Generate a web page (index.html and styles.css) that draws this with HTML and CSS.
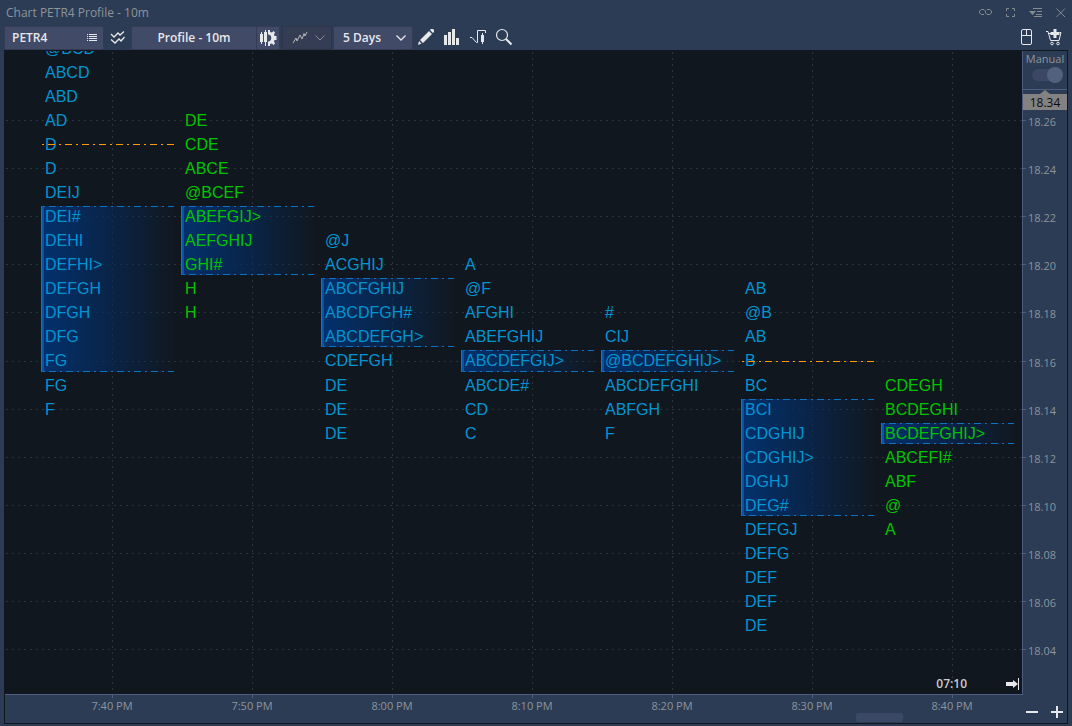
FILE: index.html
```html
<!DOCTYPE html>
<html lang="en">
<head>
<meta charset="utf-8">
<title>Chart PETR4 Profile - 10m</title>
<link rel="stylesheet" href="styles.css">
</head>
<body>
<div class="window">
  <header class="titlebar">
    <h1 class="title">Chart PETR4 Profile - 10m</h1>
    <div class="window-actions">
      <button class="icon-btn" aria-label="Link"><svg width="14" height="12" viewBox="0 0 14 12" fill="none" stroke="currentColor"><path d="M5 7.500H2.500L.5 6V4L2.500 2.500H5L6.500 4V5.500M6.500 4.500V6L8 7.500H10.500L12.500 6V4L10.500 2.500H8"/></svg></button>
      <button class="icon-btn" aria-label="Maximize"><svg width="12" height="12" viewBox="0 0 12 12" fill="none" stroke="currentColor"><path d="M1.500 4V1.500H4M7 1.500H9.500V4M9.500 7V9.500H7M4 9.500H1.500V7"/></svg></button>
      <button class="icon-btn" aria-label="Menu"><svg width="14" height="12" viewBox="0 0 14 12" fill="none" stroke="currentColor"><path d="M0 4H7L3.500 8Z" fill="currentColor" stroke="none"/><path d="M4 1.500H13M8 4.500H13M7 7.500H13M5 9.500H13"/></svg></button>
      <button class="icon-btn" aria-label="Close"><svg width="12" height="12" viewBox="0 0 12 12" fill="none" stroke="currentColor"><path d="M1.500 1.500L10 10M10 1.500L1.500 10"/></svg></button>
    </div>
  </header>

  <div class="toolbar">
    <div class="field symbol">
      <input class="symbol-input" type="text" value="PETR4" aria-label="Symbol">
      <button class="icon-btn" aria-label="Symbol list"><svg width="12" height="10" viewBox="0 0 12 10" fill="none" stroke="currentColor"><path d="M0 1.500H1M2 1.500H10M0 3.500H1M2 3.500H10M0 5.500H1M2 5.500H10M0 7.500H1M2 7.500H10"/></svg></button>
    </div>
    <button class="icon-btn compare" aria-label="Compare"><svg width="16" height="16" viewBox="0 0 16 16" fill="none" stroke="currentColor" stroke-width="1.300"><path d="M1 4L4 7L8 3L10 5L14 1.500M1 9.500L5 13L9 9L11 11L14.500 7"/></svg></button>
    <button class="field profile">Profile - 10m</button>
    <button class="field settings" aria-label="Chart settings"><svg width="20" height="18" viewBox="0 0 20 18"><path d="M2 5h3v8h-3zM3 3h1v12h-1zM6 3h3v10h-3zM7 1h1v16h-1z" fill="currentColor"/><path d="M10 1h2v2l2 .5 1.500-1.500 1.500 1.500-1 2 .5 1.500H18.500v4H16.500l-.5 1.500 1 2-1.500 1.500-1.500-1.500-2 .5v2h-2v-4.500c4.500 0 4.500-7 0-7z" fill="currentColor"/></svg></button>
    <button class="field line-tool" aria-label="Line style" disabled>
      <svg width="16" height="14" viewBox="0 0 16 14" fill="none" stroke="currentColor"><path d="M1 12L4 7L5 10L8 4L10 8L12 2.500L13 5L15 1"/></svg>
      <svg width="10" height="8" viewBox="0 0 10 8" fill="none" stroke="currentColor"><path d="M.5 1.500L5 6L9.500 1.500"/></svg>
    </button>
    <div class="field days">
      <select class="days-select" aria-label="Period"><option>5 Days</option></select>
      <svg class="days-arrow" width="10" height="8" viewBox="0 0 10 8" fill="none" stroke="currentColor" stroke-width="1.300"><path d="M.5 1.500L5 6L9.500 1.500"/></svg>
    </div>
    <div class="tools">
      <button class="icon-btn" aria-label="Draw"><svg width="18" height="18" viewBox="0 0 18 18" fill="currentColor"><path d="M1 17L2 13L4.500 15.500ZM3 12L12 3L15 6L6 15ZM13 2L14 1H16L17 2V4L16 5Z"/></svg></button>
      <button class="icon-btn" aria-label="Volume"><svg width="18" height="18" viewBox="0 0 18 18" fill="currentColor"><path d="M1 7h3v10h-3zM5 4h3v13h-3zM9 1h3v16h-3zM13 10h3v7h-3z"/></svg></button>
      <button class="icon-btn" aria-label="Signals"><svg width="18" height="18" viewBox="0 0 18 18"><path d="M1 9.500H3L7.500 14.500H8.500V2.500H16.500V5" fill="none" stroke="currentColor"/><path d="M12 7h3v7h-3zM13 5h1v11h-1z" fill="currentColor"/></svg></button>
      <button class="icon-btn" aria-label="Search"><svg width="18" height="18" viewBox="0 0 18 18" fill="none" stroke="currentColor"><circle cx="7" cy="7" r="5.500" stroke-width="1.200"/><path d="M11 11L16.500 16.500" stroke-width="2.200"/></svg></button>
    </div>
    <div class="trade-tools">
      <button class="icon-btn" aria-label="Mouse trading"><svg width="12" height="18" viewBox="0 0 12 18" fill="none" stroke="currentColor"><rect x=".5" y="1.500" width="10" height="15" rx="1.500"/><path d="M.5 7.500H10.500M5.500 2V7.500"/></svg></button>
      <button class="icon-btn" aria-label="Add order"><svg width="18" height="18" viewBox="0 0 18 18" fill="none" stroke="currentColor"><path d="M1 3.500H3L5.500 12.500H14L16 4.500H14.500M4 5.500H6" /><path d="M10 1V10M5.500 5.500H14.500" stroke-width="3"/><circle cx="7" cy="15.500" r="1.300"/><circle cx="13" cy="15.500" r="1.300"/></svg></button>
    </div>
  </div>

  <main class="chart">
    <section class="plot" aria-label="Market profile">
      <svg class="grid-lines" width="100%" height="100%" aria-hidden="true">
        <g class="h-lines">
          <line x1="1" x2="100%" y1="69.500" y2="69.500"/><line x1="1" x2="100%" y1="117.500" y2="117.500"/><line x1="1" x2="100%" y1="165.500" y2="165.500"/><line x1="1" x2="100%" y1="213.500" y2="213.500"/><line x1="1" x2="100%" y1="261.500" y2="261.500"/><line x1="1" x2="100%" y1="310.500" y2="310.500"/><line x1="1" x2="100%" y1="358.500" y2="358.500"/><line x1="1" x2="100%" y1="406.500" y2="406.500"/><line x1="1" x2="100%" y1="454.500" y2="454.500"/><line x1="1" x2="100%" y1="502.500" y2="502.500"/><line x1="1" x2="100%" y1="550.500" y2="550.500"/><line x1="1" x2="100%" y1="598.500" y2="598.500"/>
        </g>
        <g class="v-lines">
          <line x1="107.500" x2="107.500" y1="1" y2="100%"/><line x1="247.500" x2="247.500" y1="1" y2="100%"/><line x1="387.500" x2="387.500" y1="1" y2="100%"/><line x1="527.500" x2="527.500" y1="1" y2="100%"/><line x1="667.500" x2="667.500" y1="1" y2="100%"/><line x1="807.500" x2="807.500" y1="1" y2="100%"/><line x1="947.500" x2="947.500" y1="1" y2="100%"/>
        </g>
      </svg>
      <div class="profiles">
        <div class="profile-col">
          <p>@BCD</p><p>ABCD</p><p>ABD</p><p>AD</p><p class="open-line">D</p><p>D</p><p>DEIJ</p>
          <div class="value-area"><p>DEI#</p><p>DEHI</p><p>DEFHI&gt;</p><p>DEFGH</p><p>DFGH</p><p>DFG</p><p class="tall">FG</p></div>
          <p>FG</p><p>F</p>
        </div>
        <div class="profile-col start-4 up">
          <p>DE</p><p>CDE</p><p>ABCE</p><p>@BCEF</p>
          <div class="value-area"><p>ABEFGIJ&gt;</p><p>AEFGHIJ</p><p>GHI#</p></div>
          <p>H</p><p>H</p>
        </div>
        <div class="profile-col start-9">
          <p>@J</p><p>ACGHIJ</p>
          <div class="value-area"><p>ABCFGHIJ</p><p>ABCDFGH#</p><p>ABCDEFGH&gt;</p></div>
          <p class="tall">CDEFGH</p><p>DE</p><p>DE</p><p>DE</p>
        </div>
        <div class="profile-col start-10">
          <p>A</p><p>@F</p><p>AFGHI</p><p>ABEFGHIJ</p>
          <div class="value-area"><p class="tall">ABCDEFGIJ&gt;</p></div>
          <p>ABCDE#</p><p>CD</p><p>C</p>
        </div>
        <div class="profile-col start-12">
          <p>#</p><p>CIJ</p>
          <div class="value-area"><p class="tall">@BCDEFGHIJ&gt;</p></div>
          <p>ABCDEFGHI</p><p>ABFGH</p><p>F</p>
        </div>
        <div class="profile-col start-11">
          <p>AB</p><p>@B</p><p>AB</p><p class="tall open-line">B</p><p>BC</p>
          <div class="value-area"><p>BCI</p><p>CDGHIJ</p><p>CDGHIJ&gt;</p><p>DGHJ</p><p>DEG#</p></div>
          <p>DEFGJ</p><p>DEFG</p><p>DEF</p><p>DEF</p><p>DE</p>
        </div>
        <div class="profile-col start-15 up">
          <p>CDEGH</p><p>BCDEGHI</p>
          <div class="value-area"><p>BCDEFGHIJ&gt;</p></div>
          <p>ABCEFI#</p><p>ABF</p><p>@</p><p>A</p>
        </div>
      </div>
      <div class="plot-status">
        <time>07:10</time>
        <button class="icon-btn" aria-label="Go to latest"><svg width="14" height="14" viewBox="0 0 14 14"><path d="M0 5h7V3l5 4-5 4V9H0zM12 1h1v12h-1z" fill="currentColor"/></svg></button>
      </div>
    </section>

    <aside class="price-axis">
      <div class="scale-mode">
        <label for="manual">Manual</label>
        <input id="manual" class="toggle" type="checkbox" role="switch" checked>
      </div>
      <div class="price-tag">18.34</div>
      <ul class="prices">
        <li>18.26</li><li>18.24</li><li>18.22</li><li>18.20</li><li class="tall-step">18.18</li><li>18.16</li><li>18.14</li><li>18.12</li><li>18.10</li><li>18.08</li><li>18.06</li><li>18.04</li>
      </ul>
    </aside>

    <footer class="time-axis">
      <ul class="times">
        <li>7:40 PM</li><li>7:50 PM</li><li>8:00 PM</li><li>8:10 PM</li><li>8:20 PM</li><li>8:30 PM</li><li>8:40 PM</li>
      </ul>
      <div class="scroll-thumb"></div>
      <div class="zoom-controls">
        <button class="icon-btn" aria-label="Zoom out"><svg width="14" height="14" viewBox="0 0 14 14" stroke="currentColor" stroke-width="2"><path d="M1 7H13"/></svg></button>
        <button class="icon-btn" aria-label="Zoom in"><svg width="14" height="14" viewBox="0 0 14 14" stroke="currentColor" stroke-width="2"><path d="M1 7H13M7 1V13"/></svg></button>
      </div>
    </footer>
  </main>
</div>
</body>
</html>
```
FILE: styles.css
```css
* { box-sizing: border-box; margin: 0; padding: 0; }

:root {
  --frame: #2b3c54;
  --plot: #11171f;
  --field: #414a66;
  --field-edge: #343b53;
  --axis-line: #4f5d80;
  --muted: #8d949c;
  --light: #e6e8eb;
  --dash-dot: transparent 0 1px, currentColor 1px 3px, transparent 3px 7px, currentColor 7px 14px, transparent 14px 17px;
}

body {
  background: var(--frame);
  color: var(--muted);
  font: 12px/16px "Open Sans", "Noto Sans", sans-serif;
}

ul { list-style: none; }

button, input, select { font: inherit; color: inherit; }

svg { display: block; flex: none; }

.window {
  display: flex;
  flex-direction: column;
  height: 100vh;
  padding: 0 4px 2px;
  overflow: hidden;
}

.icon-btn {
  display: flex;
  align-items: center;
  justify-content: center;
  background: none;
  border: 0;
  flex: none;
}

.titlebar {
  display: flex;
  align-items: center;
  justify-content: space-between;
  height: 26px;
  padding: 0 1px 0 2px;
  flex: none;
}

.title { font-size: 12px; font-weight: 400; }

.window-actions { display: flex; gap: 12px; align-items: center; color: #858b91; }

.toolbar {
  display: flex;
  height: 24px;
  flex: none;
  color: var(--light);
}

.field {
  display: flex;
  align-items: center;
  height: 24px;
  background: var(--field);
  border: 1px solid var(--field-edge);
  font-weight: 600;
}

.symbol { width: 100px; padding: 0 4px 0 7px; }

.symbol-input {
  flex: 1;
  min-width: 0;
  background: none;
  border: 0;
  outline: 0;
}

.compare { width: 27px; }

.profile { width: 126px; justify-content: center; }

.settings { width: 24px; justify-content: center; margin-left: -1px; }

.line-tool {
  width: 50px;
  margin-left: 2px;
  padding: 0 6px 0 9px;
  justify-content: space-between;
  background: #343d54;
  border-color: #2d344b;
  color: #858b9b;
}

.line-tool svg:first-child { color: #b6b8bc; }

.days { width: 80px; margin-left: 1px; position: relative; }

.days-select {
  width: 100%;
  height: 100%;
  padding-left: 9px;
  appearance: none;
  background: none;
  border: 0;
}

.days-arrow { position: absolute; right: 6px; top: 7px; pointer-events: none; }

.tools { display: flex; gap: 8px; margin-left: 4px; padding-bottom: 2px; }

.trade-tools { display: flex; gap: 12px; margin-left: auto; padding: 0 5px 2px 0; }

.chart {
  flex: 1;
  min-height: 0;
  display: grid;
  grid-template-columns: minmax(0, 1fr) 45px;
  grid-template-rows: minmax(0, 1fr) 29px;
  border: 1px solid var(--plot);
}

.plot {
  position: relative;
  overflow: hidden;
  background: var(--plot);
}

.grid-lines { position: absolute; inset: 0; stroke: #2c343c; }

.h-lines { stroke-dasharray: 2 4; }

.v-lines { stroke-dasharray: 2 4; }

.profiles {
  position: relative;
  display: flex;
  align-items: flex-start;
  margin: -15px 0 0 36px;
}

.profile-col {
  flex: none;
  width: 140px;
  color: #0294d2;
  font: 16px/26px "Liberation Sans", Arial, sans-serif;
}

.profile-col.up { color: #00c400; }

.profile-col p { position: relative; height: 24px; padding-left: 4px; white-space: nowrap; }

.profile-col p.tall { height: 25px; }

/* each start class skips whole 24px price rows */
.start-4 { padding-top: 72px; }
.start-9 { padding-top: 192px; }
.start-10 { padding-top: 216px; }
.start-11 { padding-top: 240px; }
.start-12 { padding-top: 264px; }
.start-15 { padding-top: 337px; }

.value-area { position: relative; }

.value-area::before {
  content: "";
  position: absolute;
  inset: 2px 7px 1px 0;
  color: #0a74c4;
  border-left: 1px solid #0878d0;
  background:
    repeating-linear-gradient(90deg, var(--dash-dot)) 0 0 / 100% 1px no-repeat,
    repeating-linear-gradient(90deg, var(--dash-dot)) 0 100% / 100% 1px no-repeat,
    linear-gradient(#0357a8, #0357a8) 0 0 / 2px 100% no-repeat,
    linear-gradient(90deg, rgba(2, 50, 113, .95), rgba(6, 42, 90, .7) 50%, rgba(17, 30, 40, .1));
}

.open-line::after {
  content: "";
  position: absolute;
  top: 12px;
  left: 0;
  width: 133px;
  height: 1px;
  color: #ff9a00;
  background: repeating-linear-gradient(90deg, var(--dash-dot));
}

.tall.open-line::after { top: 13px; }

.plot-status {
  position: absolute;
  right: 2px;
  bottom: 2px;
  display: flex;
  align-items: center;
  gap: 39px;
  color: var(--light);
  font-weight: 600;
}

.plot-status time { color: #c9cbcd; }

.price-axis { border-left: 1px solid var(--axis-line); }

.scale-mode {
  display: flex;
  flex-direction: column;
  align-items: center;
  height: 39px;
  border-bottom: 1px solid var(--axis-line);
  font-size: 11px;
  line-height: 15px;
}

.toggle {
  position: relative;
  appearance: none;
  width: 30px;
  height: 12px;
  margin: 3px 0 0 4px;
  border-radius: 6px;
  background: #3b4764;
}

.toggle::after {
  content: "";
  position: absolute;
  top: -2px;
  right: -1px;
  width: 16px;
  height: 16px;
  border-radius: 50%;
  background: #53617f;
}

.price-tag {
  position: relative;
  margin-top: 4px;
  height: 16px;
  background: #828282;
  color: #0c0c0c;
  line-height: 18px;
  text-align: center;
}

.price-tag::before {
  content: "";
  position: absolute;
  left: 17px;
  top: -4px;
  border: 5px solid transparent;
  border-top: 0;
  border-bottom: 4px solid #828282;
}

.prices { font-size: 11px; line-height: 24px; }

.prices li { position: relative; height: 48px; padding-left: 5px; }

.prices li.tall-step { height: 49px; }

.prices li::before {
  content: "";
  position: absolute;
  left: 0;
  top: 10px;
  width: 3px;
  height: 1px;
  background: var(--axis-line);
}

.time-axis {
  grid-column: 1 / -1;
  position: relative;
  font-size: 11px;
}

.time-axis::before {
  content: "";
  position: absolute;
  inset: 0 44px auto 0;
  height: 1px;
  background: var(--axis-line);
}

.times { display: flex; padding-left: 37px; line-height: 24px; }

.times li {
  flex: none;
  width: 140px;
  text-align: center;
  background: linear-gradient(var(--axis-line), var(--axis-line)) 70px 0 / 1px 4px no-repeat;
}

.scroll-thumb {
  position: absolute;
  right: 164px;
  bottom: 1px;
  width: 47px;
  height: 9px;
  border-radius: 2px;
  background: #3a4866;
}

.zoom-controls {
  position: absolute;
  right: 3px;
  bottom: 4px;
  display: flex;
  gap: 11px;
  color: var(--light);
}
```
